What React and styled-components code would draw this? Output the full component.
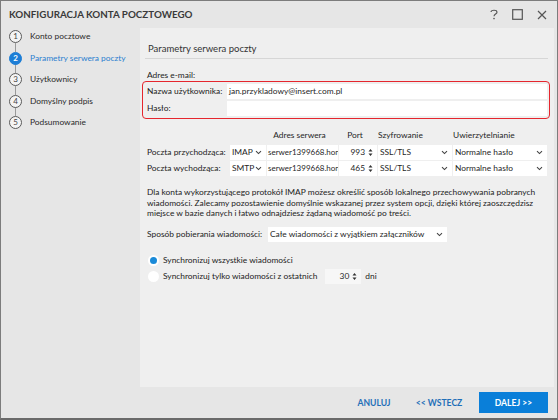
import React from "react";
import styled, { createGlobalStyle } from "styled-components";

const GlobalStyle = createGlobalStyle`
  html, body {
    margin: 0;
    padding: 0;
    background: #ffffff;
  }
  body {
    font-family: Lato, "Open Sans", sans-serif;
    font-size: 8.4px;
    line-height: 11px;
    color: #1f1f1f;
  }
`;

const Window = styled.div`
  width: 558px;
  height: 420px;
  box-sizing: border-box;
  border: 1px solid #7c7c7c;
  border-bottom: 2px solid #6a6a6a;
  background: #e6e6e6;
  display: flex;
  flex-direction: column;
  overflow: hidden;
`;

const TitleBar = styled.div`
  height: 27px;
  flex: none;
  display: flex;
  align-items: center;
  justify-content: space-between;
  padding: 0 10px 0 8px;
`;

const Title = styled.div`
  font-size: 9.8px;
  font-weight: 700;
  color: #3a3a3a;
`;

const WinButtons = styled.div`
  display: flex;
  align-items: center;
  gap: 14px;
`;

const Body = styled.div`
  flex: 1;
  display: flex;
  min-height: 0;
`;

const Sidebar = styled.div`
  width: 139px;
  box-sizing: border-box;
  flex: none;
  padding: 0 0 0 8px;
`;

const Step = styled.div`
  position: relative;
  height: 21.5px;
  box-sizing: border-box;
  padding-bottom: 4.5px;
  display: flex;
  align-items: center;
  gap: 8px;
  color: ${(p) => (p.active ? "#2b7fd0" : "#2a2a2a")};
  font-size: 8.4px;
`;

const StepDot = styled.div`
  width: 13px;
  height: 13px;
  box-sizing: border-box;
  border-radius: 50%;
  border: 1px solid ${(p) => (p.active ? "#1d7ed6" : "#5a5a5a")};
  background: ${(p) => (p.active ? "#1d7ed6" : "#f4f4f4")};
  color: ${(p) => (p.active ? "#fff" : "#444")};
  font-weight: ${(p) => (p.active ? 700 : 400)};
  font-size: 8px;
  display: flex;
  align-items: center;
  justify-content: center;
  flex: none;
  z-index: 1;
`;

const StepLine = styled.div`
  position: absolute;
  left: 6px;
  top: 14.5px;
  width: 1px;
  height: 9px;
  background: #9a9a9a;
`;

const Main = styled.div`
  flex: 1;
  display: flex;
  flex-direction: column;
  min-width: 0;
`;

const Panel = styled.div`
  flex: 1;
  background: #efefef;
  margin-right: 3px;
  padding: 15px 6px 0 7px;
`;

const Heading = styled.div`
  font-size: 9.5px;
  line-height: 12px;
  color: #333;
  padding: 0 0 3px 3px;
  margin-left: -2px;
  border-bottom: 1px solid #d6d6d6;
`;

const Label = styled.div`
  color: #222;
  white-space: nowrap;
`;

const EmailLabel = styled(Label)`
  margin: 11px 0 0 0;
`;

const AccountBox = styled.div`
  margin-left: -5px;
  margin-right: -2px;
  border: 1.5px solid #e5262e;
  border-radius: 4px;
  padding: 2px 2px 2px 4px;
  display: grid;
  grid-template-columns: 80px 1fr;
  row-gap: 2px;
  align-items: center;
`;

const TextField = styled.div`
  background: #fff;
  height: 15px;
  display: flex;
  align-items: center;
  padding: ${(p) => (p.tight ? "0 0 0 1px" : "0 2px")};
  font-size: ${(p) => (p.tight ? "8px" : "inherit")};
  white-space: nowrap;
  overflow: hidden;
  min-width: 0;
`;

const ServerGrid = styled.div`
  margin-top: 8px;
  display: grid;
  grid-template-columns: 82px 36px 71px 38px 74px 94px;
  grid-template-rows: 17px 15px 15px;
  column-gap: 1px;
  row-gap: 1px;
  align-items: center;
`;

const ColHead = styled.div`
  text-align: ${(p) => p.align || "left"};
  white-space: nowrap;
  padding-right: ${(p) => (p.align === "center" ? "6px" : "0")};
`;

const Select = styled.div`
  background: #fff;
  height: 15px;
  display: flex;
  align-items: center;
  justify-content: space-between;
  padding: 0 4px 0 2px;
  white-space: nowrap;
  width: ${(p) => p.width || "auto"};
  box-sizing: border-box;
  min-width: 0;
`;

const Spin = styled.div`
  display: flex;
  align-items: center;
  justify-content: flex-end;
  gap: 3px;
  height: 15px;
  background: ${(p) => (p.soft ? "#f7f7f7" : "#fff")};
  padding: 0 4px 0 3px;
  width: ${(p) => p.width || "auto"};
  margin-left: ${(p) => p.offset || "0"};
  box-sizing: border-box;
`;

const Note = styled.p`
  margin: 11px 0 0 0;
  font-size: 8.4px;
  line-height: 10.7px;
  color: #222;
  white-space: nowrap;
`;

const DownloadRow = styled.div`
  margin-top: 8px;
  display: flex;
  align-items: center;
`;

const DownloadLabel = styled(Label)`
  width: 121px;
  flex: none;
`;

const Radios = styled.div`
  margin-top: 10px;
  padding-left: 1px;
  display: flex;
  flex-direction: column;
`;

const RadioRow = styled.div`
  display: flex;
  align-items: center;
  height: 16px;
  gap: 4px;
`;

const Radio = styled.div`
  width: 11px;
  height: 11px;
  border-radius: 50%;
  background: #fff;
  display: flex;
  align-items: center;
  justify-content: center;
  &::after {
    content: "";
    width: 7px;
    height: 7px;
    border-radius: 50%;
    background: ${(p) => (p.checked ? "#1a8ad8" : "transparent")};
  }
`;

const Footer = styled.div`
  height: 31px;
  flex: none;
  display: flex;
  align-items: center;
  justify-content: flex-end;
  padding-right: 9px;
`;

const FooterButton = styled.button`
  border: none;
  background: ${(p) => (p.primary ? "#0a7fd9" : "transparent")};
  color: ${(p) => (p.primary ? "#fff" : "#1f6fb8")};
  font-family: inherit;
  font-weight: 700;
  font-size: 8.6px;
  height: 21px;
  padding: 0;
  width: ${(p) => p.width};
  margin-left: ${(p) => p.gap || "0"};
  cursor: pointer;
`;

const Chevron = () => (
  <svg width="7" height="5" viewBox="0 0 7 5">
    <path d="M1 1.2 L3.5 3.6 L6 1.2" fill="none" stroke="#444" strokeWidth="1.1" />
  </svg>
);

const Spinner = () => (
  <svg width="5" height="9" viewBox="0 0 5 9">
    <path d="M0.5 3.5 L2.5 1 L4.5 3.5 Z M0.5 5.5 L2.5 8 L4.5 5.5 Z" fill="#333" />
  </svg>
);

const steps = [
  "Konto pocztowe",
  "Parametry serwera poczty",
  "Użytkownicy",
  "Domyślny podpis",
  "Podsumowanie",
];

export default function App() {
  return (
    <>
      <GlobalStyle />
      <Window>
        <TitleBar>
          <Title>KONFIGURACJA KONTA POCZTOWEGO</Title>
          <WinButtons>
            <svg width="8" height="11" viewBox="0 0 8 11">
              <path d="M1 3 C1 0.8 7 0.6 7 3.2 C7 5 4 5 4 7.2" fill="none" stroke="#555" strokeWidth="1.1" />
              <circle cx="4" cy="9.6" r="0.8" fill="#555" />
            </svg>
            <svg width="11" height="11" viewBox="0 0 11 11">
              <rect x="0.7" y="0.7" width="9.6" height="9.6" fill="none" stroke="#555" strokeWidth="1.2" />
            </svg>
            <svg width="10" height="10" viewBox="0 0 10 10">
              <path d="M1 1 L9 9 M9 1 L1 9" stroke="#555" strokeWidth="1.2" />
            </svg>
          </WinButtons>
        </TitleBar>
        <Body>
          <Sidebar>
            {steps.map((s, i) => (
              <Step key={s} active={i === 1}>
                <StepDot active={i === 1}>{i + 1}</StepDot>
                {s}
                {i < steps.length - 1 && <StepLine />}
              </Step>
            ))}
          </Sidebar>
          <Main>
            <Panel>
              <Heading>Parametry serwera poczty</Heading>
              <EmailLabel>Adres e-mail:</EmailLabel>
              <AccountBox>
                <Label>Nazwa użytkownika:</Label>
                <TextField>jan.przykladowy@insert.com.pl</TextField>
                <Label>Hasło:</Label>
                <TextField />
              </AccountBox>
              <ServerGrid>
                <div />
                <div />
                <ColHead align="center">Adres serwera</ColHead>
                <ColHead align="center">Port</ColHead>
                <ColHead>Szyfrowanie</ColHead>
                <ColHead>Uwierzytelnianie</ColHead>

                <Label>Poczta przychodząca:</Label>
                <Select>IMAP<Chevron /></Select>
                <TextField tight>serwer1399668.hon</TextField>
                <Spin>993<Spinner /></Spin>
                <Select>SSL/TLS<Chevron /></Select>
                <Select>Normalne hasło<Chevron /></Select>

                <Label>Poczta wychodząca:</Label>
                <Select>SMTP<Chevron /></Select>
                <TextField tight>serwer1399668.hon</TextField>
                <Spin>465<Spinner /></Spin>
                <Select>SSL/TLS<Chevron /></Select>
                <Select>Normalne hasło<Chevron /></Select>
              </ServerGrid>
              <Note>
                Dla konta wykorzystującego protokół IMAP możesz określić sposób lokalnego przechowywania pobranych
                <br />
                wiadomości. Zalecamy pozostawienie domyślnie wskazanej przez system opcji, dzięki której zaoszczędzisz
                <br />
                miejsce w bazie danych i łatwo odnajdziesz żądaną wiadomość po treści.
              </Note>
              <DownloadRow>
                <DownloadLabel>Sposób pobierania wiadomości:</DownloadLabel>
                <Select width="179px">
                  Całe wiadomości z wyjątkiem załączników
                  <Chevron />
                </Select>
              </DownloadRow>
              <Radios>
                <RadioRow>
                  <Radio checked />
                  <Label>Synchronizuj wszystkie wiadomości</Label>
                </RadioRow>
                <RadioRow>
                  <Radio />
                  <Label>Synchronizuj tylko wiadomości z ostatnich</Label>
                  <Spin width="36px" offset="4px" soft>30<Spinner /></Spin>
                  <Label>dni</Label>
                </RadioRow>
              </Radios>
            </Panel>
            <Footer>
              <FooterButton width="48px">ANULUJ</FooterButton>
              <FooterButton width="60px" gap="11px">&lt;&lt; WSTECZ</FooterButton>
              <FooterButton width="69px" gap="10px" primary>DALEJ &gt;&gt;</FooterButton>
            </Footer>
          </Main>
        </Body>
      </Window>
    </>
  );
}
